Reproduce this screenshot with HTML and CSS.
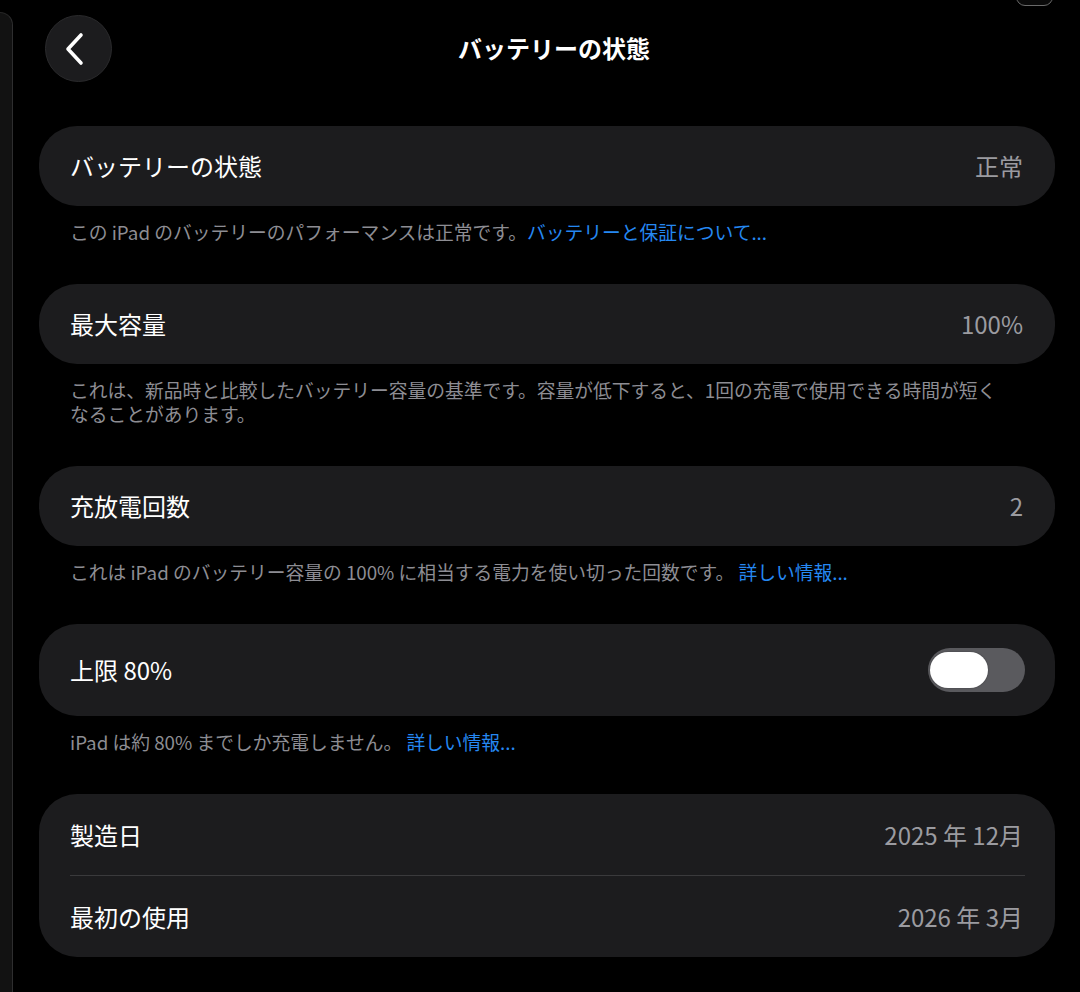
FILE: index.html
```html
<!DOCTYPE html>
<html lang="ja">
<head>
<meta charset="utf-8">
<title>バッテリーの状態</title>
<link rel="stylesheet" href="styles.css">
</head>
<body>
<div class="app">
  <aside class="sidebar"></aside>
  <main class="main">
    <header class="nav">
      <button class="back" aria-label="戻る">
        <svg width="30" height="34" viewBox="0 0 30 34" aria-hidden="true">
          <path d="M19 3 L6 17 L19 31" fill="none" stroke="#fff" stroke-width="3.6" stroke-linecap="round" stroke-linejoin="round"/>
        </svg>
      </button>
      <h1 class="title">バッテリーの状態</h1>
      <span class="nav-spacer"></span>
    </header>

    <section class="group">
      <div class="card">
        <div class="row"><span class="label">バッテリーの状態</span><span class="value">正常</span></div>
      </div>
      <p class="footer">この iPad のバッテリーのパフォーマンスは正常です。<a class="link">バッテリーと保証について...</a></p>
    </section>

    <section class="group">
      <div class="card">
        <div class="row"><span class="label">最大容量</span><span class="value">100%</span></div>
      </div>
      <p class="footer">これは、新品時と比較したバッテリー容量の基準です。容量が低下すると、1回の充電で使用できる時間が短く<br>なることがあります。</p>
    </section>

    <section class="group">
      <div class="card">
        <div class="row"><span class="label">充放電回数</span><span class="value">2</span></div>
      </div>
      <p class="footer">これは iPad のバッテリー容量の 100% に相当する電力を使い切った回数です。 <a class="link">詳しい情報...</a></p>
    </section>

    <section class="group">
      <div class="card">
        <div class="row row-tall"><span class="label">上限 80%</span>
          <span class="toggle"><span class="knob"></span></span>
        </div>
      </div>
      <p class="footer">iPad は約 80% までしか充電しません。 <a class="link">詳しい情報...</a></p>
    </section>

    <section class="group">
      <div class="card">
        <div class="row row-pair"><span class="label">製造日</span><span class="value">2025 年 12月</span></div>
        <div class="sep"></div>
        <div class="row row-pair"><span class="label">最初の使用</span><span class="value">2026 年 3月</span></div>
      </div>
    </section>
  </main>
</div>
<div class="corner-chip"></div>
</body>
</html>
```

FILE: styles.css
```css
* { box-sizing: border-box; }

html, body {
  margin: 0;
  padding: 0;
  background: #000;
  width: 1080px;
  height: 992px;
  overflow: hidden;
}

body {
  font-family: "Noto Sans CJK JP", "Noto Sans", sans-serif;
  color: #fff;
  position: relative;
}

.app {
  display: flex;
  height: 992px;
}

.sidebar {
  width: 13px;
  margin-top: 12px;
  background: #121212;
  border-right: 1.5px solid #2e2e2f;
  border-top: 1px solid #262626;
  border-top-right-radius: 13px;
  flex-shrink: 0;
}

.main {
  flex: 1;
  padding: 0 25px 0 26px;
}

.nav {
  display: grid;
  grid-template-columns: 67px 1fr 67px;
  align-items: center;
  padding-top: 15px;
  margin-left: 6px;
  margin-bottom: 44px;
}

.back {
  width: 67px;
  height: 67px;
  border-radius: 50%;
  background: #1c1c1e;
  border: 1px solid #2a2a2c;
  display: flex;
  align-items: center;
  justify-content: center;
  padding: 0 4px 0 0;
  margin: 0;
}

.title {
  margin: 0;
  text-align: center;
  font-size: 24px;
  font-weight: 700;
  line-height: 30px;
  padding-left: 8px;
  padding-bottom: 2px;
}

.group {
  margin-bottom: 40px;
}

.card {
  background: #1c1c1e;
  border-radius: 38px;
  padding: 0 31px;
}

.row {
  height: 80px;
  display: flex;
  align-items: center;
  justify-content: space-between;
}

.row-tall {
  height: 92px;
}

.row-pair {
  height: 81px;
}

.label {
  font-size: 24px;
  line-height: 30px;
  color: #fff;
}

.value {
  font-size: 24px;
  line-height: 30px;
  color: #9b9ba0;
  margin-right: 1px;
}

.sep {
  height: 1px;
  background: #3a3a3c;
  margin-right: -1px;
}

.footer {
  margin: 0;
  padding: 14px 31px 0;
  font-size: 18.75px;
  line-height: 24px;
  color: #8d8d93;
}

.link {
  color: #2588f2;
}

.toggle {
  width: 97px;
  height: 44px;
  border-radius: 22px;
  background: #5a5a5e;
  display: flex;
  align-items: center;
  padding-left: 2px;
  margin-right: -1px;
}

.knob {
  width: 58px;
  height: 36px;
  border-radius: 18px;
  background: #fff;
  box-shadow: 0 0 2px rgba(0, 0, 0, 0.35);
}

.corner-chip {
  position: absolute;
  top: -30px;
  left: 1016px;
  width: 37px;
  height: 36px;
  border-radius: 9px;
  border: 1.5px solid #6a6a6a;
  background: #0a0a0a;
}
```
